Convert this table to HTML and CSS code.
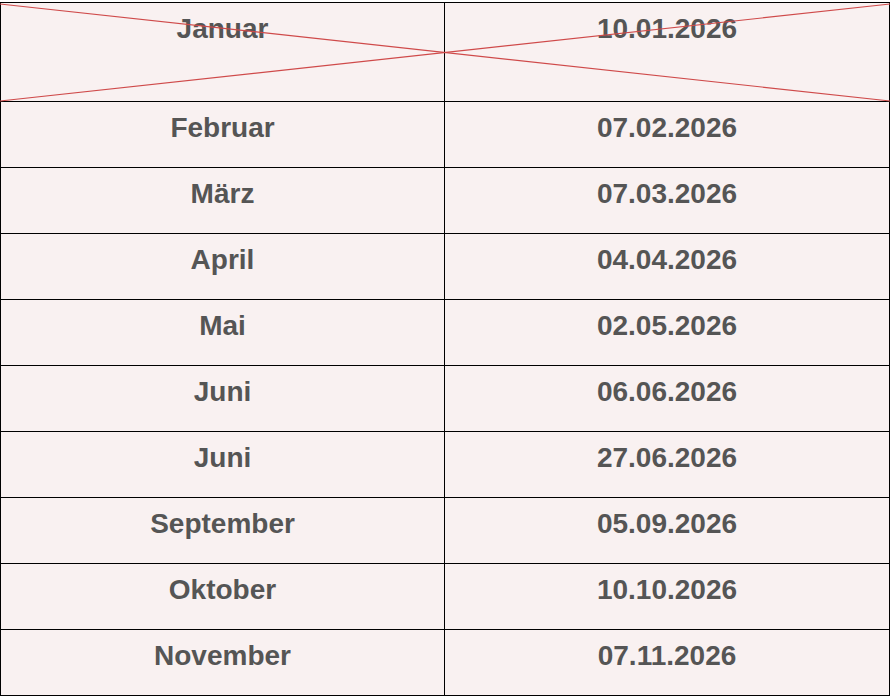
FILE: index.html
```html
<!DOCTYPE html>
<html lang="de">
<head>
<meta charset="utf-8">
<title>Termine 2026</title>
<link rel="stylesheet" href="styles.css">
</head>
<body>
<div class="page">
  <div class="schedule">
    <div class="cell first">Januar</div>
    <div class="cell first">10.01.2026</div>
    <div class="cell">Februar</div>
    <div class="cell">07.02.2026</div>
    <div class="cell">März</div>
    <div class="cell">07.03.2026</div>
    <div class="cell">April</div>
    <div class="cell">04.04.2026</div>
    <div class="cell">Mai</div>
    <div class="cell">02.05.2026</div>
    <div class="cell">Juni</div>
    <div class="cell">06.06.2026</div>
    <div class="cell">Juni</div>
    <div class="cell">27.06.2026</div>
    <div class="cell">September</div>
    <div class="cell">05.09.2026</div>
    <div class="cell">Oktober</div>
    <div class="cell">10.10.2026</div>
    <div class="cell">November</div>
    <div class="cell">07.11.2026</div>
    <svg class="cross" viewBox="0 0 890 99" preserveAspectRatio="none" aria-hidden="true">
      <line x1="0" y1="1" x2="890" y2="98" />
      <line x1="0" y1="98" x2="890" y2="1" />
    </svg>
  </div>
</div>
</body>
</html>
```

FILE: styles.css
```css
html, body {
  margin: 0;
  padding: 0;
  background: #ffffff;
}

.page {
  padding-top: 2px;
}

.schedule {
  position: relative;
  display: grid;
  grid-template-columns: 444px 445px;
  width: 890px;
  box-sizing: border-box;
  border-left: 1px solid #000;
  border-top: 1px solid #000;
  background: #f9f1f1;
  font-family: "Liberation Sans", Arial, sans-serif;
  font-weight: bold;
  font-size: 28px;
  line-height: 32px;
  color: #555555;
}

.cell {
  box-sizing: border-box;
  height: 66px;
  padding-top: 10px;
  text-align: center;
  border-right: 1px solid #000;
  border-bottom: 1px solid #000;
}

.cell.first {
  height: 99px;
}

.cross {
  position: absolute;
  left: -1px;
  top: 0;
  width: 890px;
  height: 99px;
  pointer-events: none;
}

.cross line {
  stroke: #cf4a4a;
  stroke-width: 1.2;
  vector-effect: non-scaling-stroke;
}
```
